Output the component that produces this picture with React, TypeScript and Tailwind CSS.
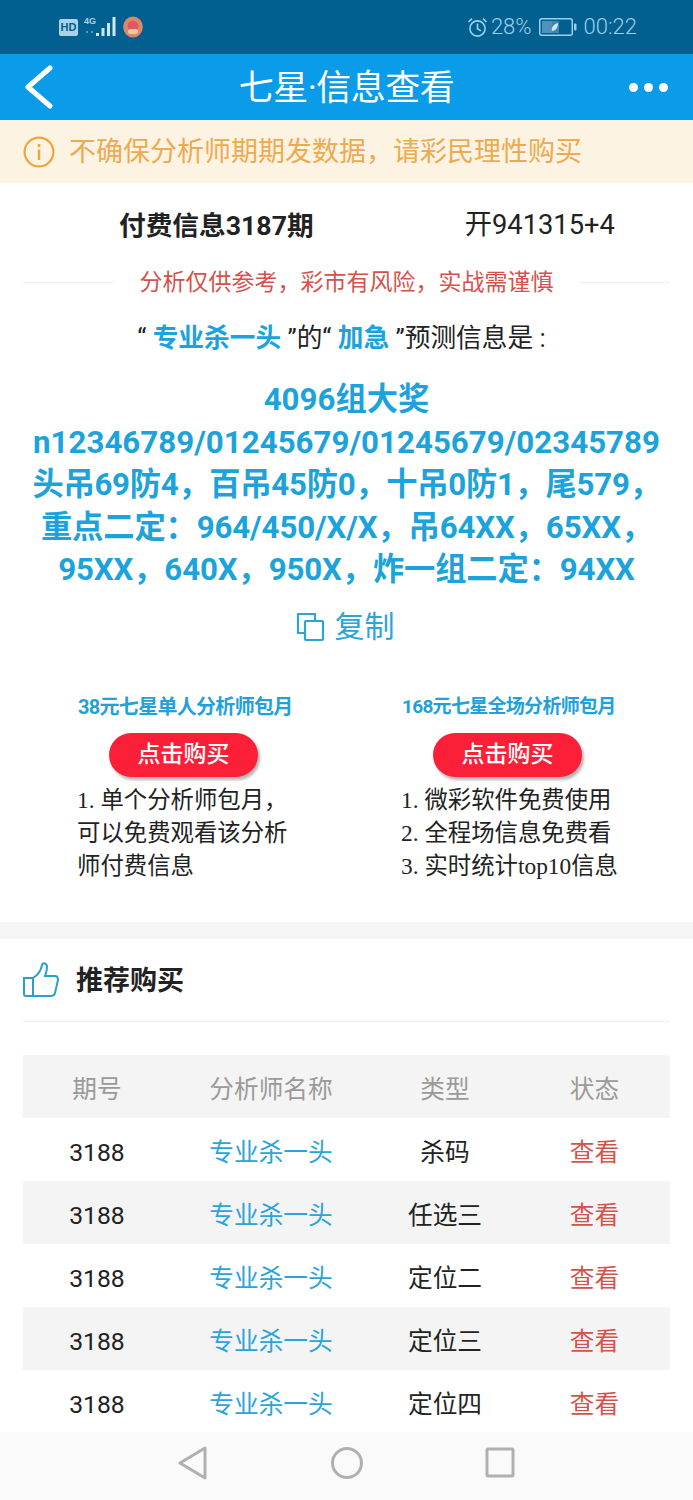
import React from 'react';

const SANS = "font-['Roboto','Noto_Sans_CJK_SC',sans-serif]";

const rows = [
  { type: '杀码', shaded: false },
  { type: '任选三', shaded: true },
  { type: '定位二', shaded: false },
  { type: '定位三', shaded: true },
  { type: '定位四', shaded: false },
];

const StatusBar: React.FC = () => (
  <div className="h-[54px] shrink-0 bg-[#01608f] flex items-center justify-between pl-[59px] pr-[56px] text-[#9bd0ec]">
    <div className="flex items-center">
      <div className="w-[19px] h-[17px] bg-[#a9d3e8] rounded-[2px] flex items-center justify-center text-[#01608f] text-[11px] font-bold leading-none font-['Liberation_Sans',sans-serif]">
        HD
      </div>
      <svg className="ml-[6px]" width="34" height="22" viewBox="0 0 34 22">
        <text x="0" y="8" fontSize="9" fontWeight="700" fill="#a9d3e8" fontFamily="Liberation Sans, sans-serif">4G</text>
        <rect x="2" y="15" width="2" height="2" fill="#4d9cc4" />
        <rect x="7" y="15" width="2" height="2" fill="#4d9cc4" />
        <rect x="12" y="17" width="3" height="3" fill="#cfe7f3" />
        <rect x="17.5" y="12" width="3" height="8" fill="#cfe7f3" />
        <rect x="23" y="7" width="3" height="13" fill="#cfe7f3" />
        <rect x="28.5" y="1" width="3" height="19" fill="#cfe7f3" />
      </svg>
      <svg className="ml-[5px]" width="20" height="22" viewBox="0 0 20 22">
        <ellipse cx="10" cy="11" rx="9.8" ry="10.5" fill="#d98a6a" />
        <circle cx="10" cy="10" r="5.5" fill="#e2566a" />
        <rect x="5" y="13" width="10" height="5" rx="2.5" fill="#e8c9a0" />
      </svg>
    </div>
    <div className="flex items-center">
      <svg width="21" height="21" viewBox="0 0 21 21" fill="none" stroke="#9bd0ec" strokeWidth="1.6">
        <circle cx="10.5" cy="11.5" r="7.6" />
        <path d="M10.5 6.5v5.2l3.4 2.2" />
        <path d="M1.5 5 5 1.6M19.5 5 16 1.6" />
      </svg>
      <span className="ml-[3px] text-[22px] leading-none font-light font-['Roboto',sans-serif]">28%</span>
      <svg className="ml-[7px]" width="38" height="18" viewBox="0 0 38 18" fill="none">
        <rect x="0.75" y="0.75" width="32.5" height="16.5" rx="2" stroke="#9bd0ec" strokeWidth="1.5" />
        <rect x="3" y="3" width="10" height="12" fill="#4f93b8" />
        <rect x="13" y="3" width="7" height="12" fill="#3f86ac" />
        <path d="M13 13c-1-4 2-7 6-8 0 4-2 8-6 8z" fill="#cfe7f3" />
        <rect x="35" y="5.5" width="2.5" height="7" rx="1" fill="#9bd0ec" />
      </svg>
      <span className="ml-[7px] text-[22px] leading-none font-light font-['Roboto',sans-serif]">00:22</span>
    </div>
  </div>
);

const NavBar: React.FC = () => (
  <div className="h-[66px] shrink-0 bg-[#0a9ce9] flex items-center justify-between pl-[24px] pr-[25px] relative">
    <svg width="30" height="44" viewBox="0 0 30 44" fill="none" stroke="#ffffff" strokeWidth="5" strokeLinecap="round" strokeLinejoin="round">
      <path d="M26 3 4 22l22 19" />
    </svg>
    <div className="absolute inset-x-0 pt-[2px] text-center text-white text-[35px] leading-none tracking-[-0.5px]">七星·信息查看</div>
    <div className="flex gap-[6px]">
      <span className="w-[9px] h-[9px] rounded-full bg-white" />
      <span className="w-[9px] h-[9px] rounded-full bg-white" />
      <span className="w-[9px] h-[9px] rounded-full bg-white" />
    </div>
  </div>
);

const Plan: React.FC<{ title: string; lines: string[]; titleClass: string }> = ({ title, lines, titleClass }) => (
  <div>
    <div className={`ml-[1px] leading-[26px] font-bold text-[#21a1da] whitespace-nowrap ${titleClass}`}>{title}</div>
    <div className="ml-[32px] mt-[13px] w-[149px] h-[44px] rounded-full bg-[#fb1f38] shadow-[2px_3px_3px_rgba(0,0,0,0.3)] flex items-center justify-center text-white text-[23px] font-medium leading-none">
      点击购买
    </div>
    <div className="mt-[7px] text-[23.4px] leading-[33px] text-[#222] whitespace-nowrap font-['Liberation_Serif','Noto_Sans_CJK_SC',serif]">
      {lines.map((l) => (
        <div key={l}>{l}</div>
      ))}
    </div>
  </div>
);

export default function App() {
  return (
    <div className={`w-[693px] h-[1500px] overflow-hidden flex flex-col bg-white ${SANS}`}>
      <StatusBar />
      <NavBar />

      {/* notice */}
      <div className="h-[63px] shrink-0 bg-[#fdf3e3] flex items-center pl-[23px]">
        <svg width="32" height="32" viewBox="0 0 32 32" fill="none" stroke="#eda53e" strokeWidth="2.2">
          <circle cx="16" cy="16" r="14.4" />
          <path d="M16 13.5V24" strokeWidth="2.4" />
          <path d="M16 8v3" strokeWidth="2.6" />
        </svg>
        <span className="ml-[14px] pt-[2px] text-[27px] leading-none text-[#eeaa4f]">不确保分析师期期发数据，请彩民理性购买</span>
      </div>

      <div className="flex-1 min-h-0 overflow-hidden">
        {/* info */}
        <div className="h-[739px] flex flex-col">
          <div className="flex items-center h-[86px] pl-[119px] text-[#222] shrink-0">
            <span className="text-[26.7px] font-bold leading-none">付费信息3187期</span>
            <span className="ml-[151px] text-[27.3px] leading-none">开941315+4</span>
          </div>
          <div className="flex items-center h-[26px] px-[23px]">
            <div className="flex-1 h-px bg-[#f0f0f0]" />
            <span className="px-[26px] text-[23px] leading-none text-[#d4524c] whitespace-nowrap">分析仅供参考，彩市有风险，实战需谨慎</span>
            <div className="flex-1 h-px bg-[#f0f0f0]" />
          </div>
          <div className="mt-[27px] h-[34px] flex items-center justify-center pr-[10px] text-[25.7px] leading-none text-[#222] whitespace-pre">
            <span>“ </span>
            <span className="font-bold text-[#1ca3db]">专业杀一头</span>
            <span> ”的“ </span>
            <span className="font-bold text-[#1ca3db]">加急</span>
            <span> ”预测信息是 :</span>
          </div>
          <div className="mt-[23px] text-center text-[31.3px] leading-[42.5px] font-bold text-[#1ca3db] whitespace-nowrap">
            <div>4096组大奖</div>
            <div>n12346789/01245679/01245679/02345789</div>
            <div className="tracking-[-0.3px]">头吊69防4，百吊45防0，十吊0防1，尾579，</div>
            <div className="tracking-[-0.15px]">重点二定：964/450/X/X，吊64XX，65XX，</div>
            <div className="tracking-[-0.15px]">95XX，640X，950X，炸一组二定：94XX</div>
          </div>
          <div className="mt-[15px] h-[40px] flex items-center justify-center text-[#2ba4d8] text-[30px] leading-none pr-[3px]">
            <svg width="30" height="30" viewBox="0 0 30 30" fill="none" stroke="#2ba4d8" strokeWidth="2.2">
              <path d="M9 21H2V2h17v7" />
              <rect x="9" y="9" width="18" height="19" rx="1" />
            </svg>
            <span className="ml-[9px]">复制</span>
          </div>
          <div className="mt-[47px] flex pl-[77px]">
            <div className="w-[324px]">
              <Plan
                title="38元七星单人分析师包月"
                titleClass="text-[20px] tracking-[-0.7px]"
                lines={['1. 单个分析师包月，', '可以免费观看该分析', '师付费信息']}
              />
            </div>
            <Plan
              title="168元七星全场分析师包月"
              titleClass="text-[19px] tracking-[-0.7px]"
              lines={['1. 微彩软件免费使用', '2. 全程场信息免费看', '3. 实时统计top10信息']}
            />
          </div>
        </div>

        {/* gap */}
        <div className="h-[17px] bg-[#f5f5f5]" />

        {/* recommended */}
        <div className="px-[23px]">
          <div className="h-[83px] flex items-center border-b border-[#f0f0f0]">
            <svg width="36" height="36" viewBox="0 0 36 36" fill="none" stroke="#2b9fd2" strokeWidth="2">
              <path d="M1 16h9v18H3a2 2 0 0 1-2-2z" />
              <path d="M10 16c5-3 8-7 9-13 1-3 5-2 5 2 0 3-1 6-2 9h10c2 0 3 2 3 4l-3 13c-.5 2-2 3-4 3H10" />
            </svg>
            <span className="ml-[17px] pt-[2px] text-[27px] font-bold leading-none text-[#222]">推荐购买</span>
          </div>
          <div className="mt-[33px] grid grid-cols-[148px_200px_148px_151px] h-[63px] pt-[7px] items-center text-center bg-[#f4f4f4] text-[24.7px] leading-none text-[#9a9a9a]">
            <div>期号</div>
            <div>分析师名称</div>
            <div>类型</div>
            <div>状态</div>
          </div>
          {rows.map((r) => (
            <div
              key={r.type}
              className={`grid grid-cols-[148px_200px_148px_151px] h-[63px] pt-[7px] items-center text-center text-[24.7px] leading-none ${r.shaded ? 'bg-[#f4f4f4]' : 'bg-white'}`}
            >
              <div className="text-[#222]">3188</div>
              <div className="text-[#2ba4d8]">专业杀一头</div>
              <div className="text-[#222]">{r.type}</div>
              <div className="text-[#d4524c]">查看</div>
            </div>
          ))}
        </div>
      </div>

      {/* system nav */}
      <div className="h-[68px] shrink-0 bg-[#fafafa] flex items-start pt-[14px] pl-[178px]">
        <svg width="30" height="34" viewBox="0 0 30 34" fill="none" stroke="#b0b0b0" strokeWidth="3" strokeLinejoin="round">
          <path d="M27 2 2 17l25 15z" />
        </svg>
        <svg className="ml-[123px]" width="32" height="34" viewBox="0 0 32 34" fill="none" stroke="#b0b0b0" strokeWidth="3">
          <circle cx="16" cy="17" r="14.5" />
        </svg>
        <svg className="ml-[122px]" width="30" height="34" viewBox="0 0 30 34" fill="none" stroke="#b0b0b0" strokeWidth="3" strokeLinejoin="round">
          <rect x="2" y="3" width="26" height="27" rx="1" />
        </svg>
      </div>
    </div>
  );
}
